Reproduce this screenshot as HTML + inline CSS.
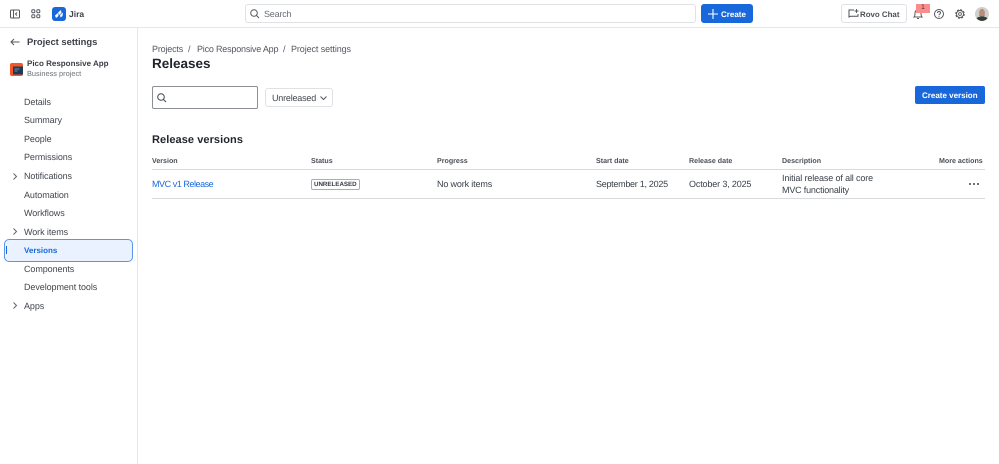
<!DOCTYPE html>
<html><head><meta charset="utf-8"><style>
html,body{margin:0;padding:0;width:999px;height:464px;overflow:hidden;background:#fff}
body{font-family:"Liberation Sans",sans-serif;color:#3b4048;position:relative;text-rendering:geometricPrecision}
.t{position:absolute;white-space:nowrap;line-height:14px;font-size:9px}
.n{left:24px;color:#42474e;font-size:9px;letter-spacing:-.08px}
.h{top:153.500px;font-size:7.100px;font-weight:bold;color:#4b5057}
.c{top:177px;color:#3b4048;font-size:9px}
.b{position:absolute;box-sizing:border-box}
svg{position:absolute;overflow:visible}
</style></head><body>
<div class="b" style="left:0;top:27px;width:999px;height:1px;background:#e6e7e9"></div>
<div class="b" style="left:137px;top:28px;width:1px;height:436px;background:#e6e7e9"></div>

<svg style="left:10px;top:9px" width="10" height="10" fill="none" stroke="#54585f" stroke-width="1"><rect x=".5" y="1" width="9" height="8" rx="1"/><path d="M3.500 1v8M7 3.500 5.500 5 7 6.500"/></svg>
<svg style="left:31px;top:9px" width="10" height="10" fill="none" stroke="#54585f" stroke-width="1"><rect x=".8" y=".8" width="3" height="3" rx="1"/><rect x="5.800" y=".8" width="3" height="3" rx="1"/><rect x=".8" y="5.800" width="3" height="3" rx="1"/><rect x="5.800" y="5.800" width="3" height="3" rx="1"/></svg>
<svg style="left:52px;top:7px" width="14" height="14"><rect width="14" height="14" rx="3" fill="#1868db"/><path d="M3 8.500 6 6l.5 3L4 11zM6 5.500 9 3l.5 3-2.500 2zM8 8l3-2.500-.5 3.500-2 1.500z" fill="#fff"/></svg>
<div class="t" style="left:69px;top:7px;font-weight:bold;color:#3f444b;font-size:8.500px">Jira</div>

<div class="b" style="left:245px;top:4px;width:451px;height:19px;border:1px solid #dfe1e4;border-radius:3px"></div>
<svg style="left:250px;top:9px" width="9" height="9" fill="none" stroke="#54585f" stroke-width="1"><circle cx="4" cy="4" r="3.300"/><path d="m6.500 6.500 2.500 2.500"/></svg>
<div class="t" style="left:264px;top:7px;color:#6a6f76;letter-spacing:-.2px">Search</div>
<div class="b" style="left:701px;top:4px;width:52px;height:19px;background:#1868db;border-radius:3px"></div>
<svg style="left:708px;top:9px" width="10" height="10" stroke="#fff" stroke-width="1.100"><path d="M5 0v10M0 5h10"/></svg>
<div class="t" style="left:721px;top:7.500px;color:#fff;font-weight:bold;font-size:8px">Create</div>

<div class="b" style="left:841px;top:4px;width:66px;height:19px;border:1px solid #dfe1e4;border-radius:3px"></div>
<svg style="left:848px;top:9px" width="11" height="10" fill="none" stroke="#4c5158" stroke-width="1"><path d="M6 1H1v7l1.500-.8H10V5"/><path d="M8.500 0v4M6.500 2h4" stroke-width=".9"/></svg>
<div class="t" style="left:860px;top:7.500px;color:#4c5158;font-weight:bold;font-size:7.900px">Rovo Chat</div>
<svg style="left:913px;top:8px" width="10" height="12" fill="none" stroke="#54585f" stroke-width="1"><path d="M1 9c1-1 1-2 1-4s1.300-3 3-3 3 1 3 3 0 3 1 4zM4 10.500h2"/></svg>
<div class="b" style="left:916px;top:4px;width:14px;height:9px;background:#f88d8d"></div>
<div class="t" style="left:921px;top:1px;color:#5d2a2a;font-size:7px">1</div>
<svg style="left:934px;top:9px" width="10" height="10" fill="none" stroke="#54585f" stroke-width="1"><circle cx="5" cy="5" r="4.500"/><path d="M3.500 4c0-2 3-2 3 0 0 1-1.500 1-1.500 2.200M5 7.300v.8"/></svg>
<svg style="left:955px;top:9px" width="10" height="10" fill="none" stroke="#54585f"><circle cx="5" cy="5" r="1.400" stroke-width=".9"/><circle cx="5" cy="5" r="3.500" stroke-width=".9"/><circle cx="5" cy="5" r="4.300" stroke-width="1" stroke-dasharray="2.100 1.280"/></svg>
<svg style="left:975px;top:7px" width="14" height="14"><circle cx="7" cy="7" r="7" fill="#d0cfcd"/><ellipse cx="7" cy="5.500" rx="2.900" ry="3.600" fill="#b98d78"/><path d="M4.300 6.500c.5 3.500 4.900 3.500 5.400 0l-.4 3H4.700z" fill="#6d5a50"/><path d="M1.500 11.300c1.500-2.300 9.500-2.300 11 0A7 7 0 0 1 1.500 11.300z" fill="#2f3f33"/></svg>

<svg style="left:10px;top:38px" width="10" height="8" fill="none" stroke="#54585f" stroke-width="1"><path d="M9.500 4H1M4 1 1 4l3 3"/></svg>
<div class="t" style="left:27px;top:35px;font-size:9.400px;font-weight:bold;color:#3b4048">Project settings</div>
<svg style="left:10px;top:63px" width="13" height="13"><rect width="13" height="13" rx="2" fill="#f4562a"/><rect x="3" y="3.500" width="10" height="8" fill="#1f3a56"/><path d="M4.500 6h5M4.500 8h3" stroke="#7fb2d8" stroke-width=".8"/></svg>
<div class="t" style="left:27px;top:57px;font-size:8px;font-weight:bold;color:#3b4048">Pico Responsive App</div>
<div class="t" style="left:27px;top:67px;font-size:7.400px;color:#6a6f76">Business project</div>

<div class="t n" style="top:95px">Details</div>
<div class="t n" style="top:113px">Summary</div>
<div class="t n" style="top:132px">People</div>
<div class="t n" style="top:150px">Permissions</div>
<div class="t n" style="top:169px">Notifications</div>
<div class="t n" style="top:188px">Automation</div>
<div class="t n" style="top:206px">Workflows</div>
<div class="t n" style="top:225px">Work items</div>
<div class="b" style="left:4px;top:239px;width:129px;height:23px;background:#e9f2fe;border:1px solid #5c94ec;border-radius:5px"></div>
<div class="b" style="left:6px;top:246px;width:1px;height:8px;background:#1868db"></div>
<div class="t n" style="top:243.500px;color:#1868db;font-weight:bold;font-size:8px;letter-spacing:0">Versions</div>
<div class="t n" style="top:262px">Components</div>
<div class="t n" style="top:280px">Development tools</div>
<div class="t n" style="top:299px">Apps</div>
<svg style="left:13px;top:173px" width="4" height="7" fill="none" stroke="#60656c"><path d="m.5.500 3 3-3 3"/></svg>
<svg style="left:13px;top:228px" width="4" height="7" fill="none" stroke="#60656c"><path d="m.5.500 3 3-3 3"/></svg>
<svg style="left:13px;top:302px" width="4" height="7" fill="none" stroke="#60656c"><path d="m.5.500 3 3-3 3"/></svg>

<div class="t" style="left:152px;top:42px;color:#54585f;letter-spacing:-.18px">Projects</div>
<div class="t" style="left:188px;top:42px;color:#54585f">/</div>
<div class="t" style="left:197px;top:42px;color:#54585f;letter-spacing:-.2px">Pico Responsive App</div>
<div class="t" style="left:283px;top:42px;color:#54585f">/</div>
<div class="t" style="left:291px;top:42px;color:#54585f;letter-spacing:-.1px">Project settings</div>
<div class="t" style="left:152px;top:57px;font-size:13.500px;font-weight:bold;color:#22262c">Releases</div>

<div class="b" style="left:152px;top:86px;width:106px;height:23px;border:1px solid #8c8f94;border-radius:2px"></div>
<svg style="left:157px;top:93px" width="9" height="9" fill="none" stroke="#3f444b" stroke-width="1"><circle cx="4" cy="4" r="3.300"/><path d="m6.500 6.500 2.500 2.500"/></svg>
<div class="b" style="left:265px;top:88px;width:68px;height:19px;border:1px solid #dfe1e4;border-radius:3px"></div>
<div class="t" style="left:272px;top:91px;color:#42474e;font-size:9px;letter-spacing:-.2px">Unreleased</div>
<svg style="left:320px;top:96px" width="7" height="4" fill="none" stroke="#54585f"><path d="m.5.500 3 3 3-3"/></svg>
<div class="b" style="left:915px;top:86px;width:70px;height:18px;background:#1868db;border-radius:2px"></div>
<div class="t" style="left:922px;top:88.500px;color:#fff;font-weight:bold;font-size:8px">Create version</div>

<div class="t" style="left:152px;top:133px;font-size:11px;font-weight:bold;color:#22262c;letter-spacing:.07px">Release versions</div>
<div class="t h" style="left:152px">Version</div>
<div class="t h" style="left:311px">Status</div>
<div class="t h" style="left:437px">Progress</div>
<div class="t h" style="left:596px">Start date</div>
<div class="t h" style="left:689px">Release date</div>
<div class="t h" style="left:782px">Description</div>
<div class="t h" style="left:939px">More actions</div>
<div class="b" style="left:152px;top:169px;width:833px;height:1px;background:#d7d9dc"></div>
<div class="b" style="left:152px;top:198px;width:833px;height:1px;background:#d7d9dc"></div>
<div class="t c" style="left:152px;color:#1868db;letter-spacing:-.45px">MVC v1 Release</div>
<div class="b" style="left:311px;top:179px;width:49px;height:11px;border:1px solid #8fb0e0;border-radius:2px"></div>
<div class="t" style="left:314px;top:178px;font-size:6.200px;font-weight:bold;color:#33383f">UNRELEASED</div>
<div class="t c" style="left:437px;letter-spacing:-.15px">No work items</div>
<div class="t c" style="left:596px;letter-spacing:-.28px">September 1, 2025</div>
<div class="t c" style="left:689px;letter-spacing:-.15px">October 3, 2025</div>
<div class="t c" style="left:782px;top:171px;letter-spacing:-.13px">Initial release of all core</div>
<div class="t c" style="left:782px;top:183px;letter-spacing:-.18px">MVC functionality</div>
<svg style="left:969px;top:183px" width="10" height="2" fill="#3f444b"><circle cx="1" cy="1" r="1"/><circle cx="5" cy="1" r="1"/><circle cx="9" cy="1" r="1"/></svg>
</body></html>
